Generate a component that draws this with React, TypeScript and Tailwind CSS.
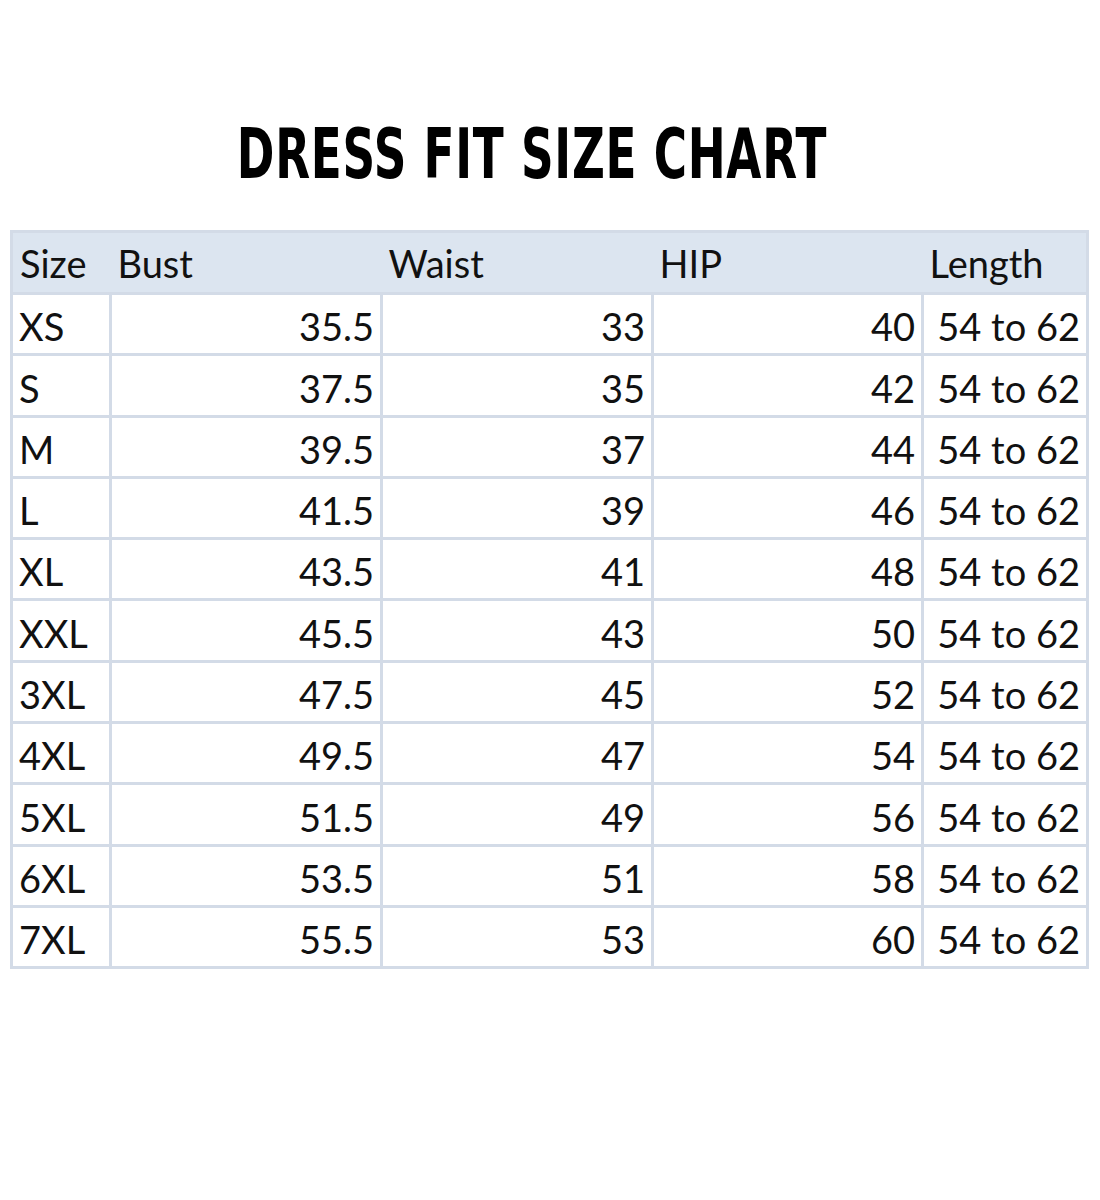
import React from "react";

const rows: [string, string, string, string, string][] = [
  ["XS", "35.5", "33", "40", "54 to 62"],
  ["S", "37.5", "35", "42", "54 to 62"],
  ["M", "39.5", "37", "44", "54 to 62"],
  ["L", "41.5", "39", "46", "54 to 62"],
  ["XL", "43.5", "41", "48", "54 to 62"],
  ["XXL", "45.5", "43", "50", "54 to 62"],
  ["3XL", "47.5", "45", "52", "54 to 62"],
  ["4XL", "49.5", "47", "54", "54 to 62"],
  ["5XL", "51.5", "49", "56", "54 to 62"],
  ["6XL", "53.5", "51", "58", "54 to 62"],
  ["7XL", "55.5", "53", "60", "54 to 62"],
];

const cell = "border-[3px] border-[#d3dbe7] px-[6px] pb-[12px] align-bottom leading-[30px]";
const head = "text-left font-normal px-[7px] pb-[14px] align-bottom leading-[30px]";

export default function App() {
  return (
    <div className="w-[1100px] h-[1200px] bg-white pt-[114px]">
      <div className="w-[1064px] flex justify-center">
        <h1 className="inline-block origin-center scale-x-[0.72] font-['DejaVu_Sans_Condensed','DejaVu_Sans',sans-serif] font-bold text-[70px] leading-[80px] tracking-[1px] text-black">
          DRESS FIT SIZE CHART
        </h1>
      </div>

      <table className="mt-[36px] ml-[10px] w-[1076px] border-collapse table-fixed font-['Lato',sans-serif] text-[38px] text-[#111]">
        <colgroup>
          <col className="w-[99px]" />
          <col className="w-[271px]" />
          <col className="w-[271px]" />
          <col className="w-[270px]" />
          <col className="w-[165px]" />
        </colgroup>
        <thead>
          <tr className="h-[62px] bg-[#dce5f0] border-[3px] border-[#d3dbe7]">
            <th className={head}>Size</th>
            <th className={head}>Bust</th>
            <th className={head}>Waist</th>
            <th className={head}>HIP</th>
            <th className={head}>Length</th>
          </tr>
        </thead>
        <tbody>
          {rows.map((r) => (
            <tr key={r[0]} className="h-[61.3px]">
              <td className={`${cell} text-left`}>{r[0]}</td>
              <td className={`${cell} text-right`}>{r[1]}</td>
              <td className={`${cell} text-right`}>{r[2]}</td>
              <td className={`${cell} text-right`}>{r[3]}</td>
              <td className={`${cell} text-right`}>{r[4]}</td>
            </tr>
          ))}
        </tbody>
      </table>
    </div>
  );
}
